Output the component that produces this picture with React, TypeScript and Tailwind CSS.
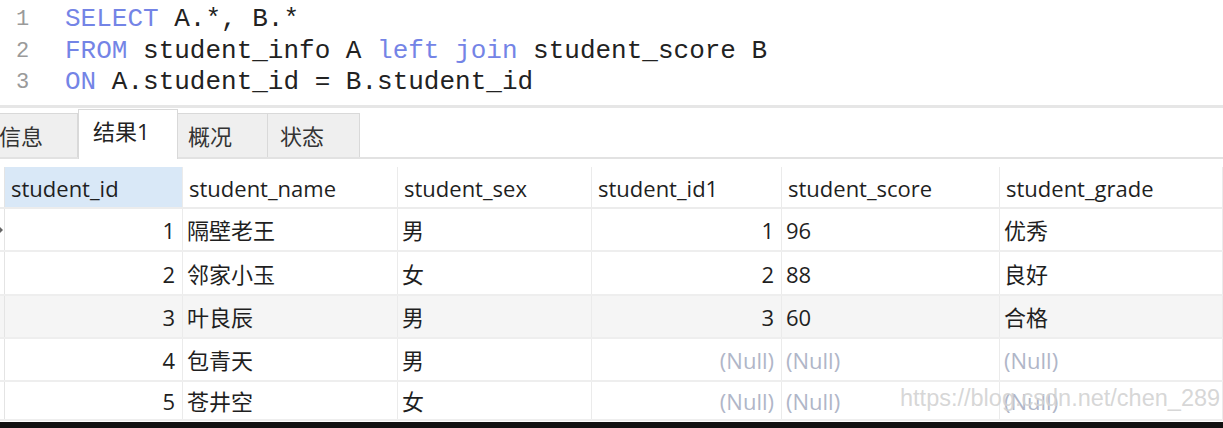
import React from "react";

const mono = { fontFamily: '"Liberation Mono", "Courier New", monospace' };

type Cell = { v: string; right?: boolean; nul?: boolean };

const rows: Cell[][] = [
  [{ v: "1", right: true }, { v: "隔壁老王" }, { v: "男" }, { v: "1", right: true }, { v: "96" }, { v: "优秀" }],
  [{ v: "2", right: true }, { v: "邻家小玉" }, { v: "女" }, { v: "2", right: true }, { v: "88" }, { v: "良好" }],
  [{ v: "3", right: true }, { v: "叶良辰" }, { v: "男" }, { v: "3", right: true }, { v: "60" }, { v: "合格" }],
  [{ v: "4", right: true }, { v: "包青天" }, { v: "男" }, { v: "(Null)", right: true, nul: true }, { v: "(Null)", nul: true }, { v: "(Null)", nul: true }],
  [{ v: "5", right: true }, { v: "苍井空" }, { v: "女" }, { v: "(Null)", right: true, nul: true }, { v: "(Null)", nul: true }, { v: "(Null)", nul: true }],
];

const headers = ["student_id", "student_name", "student_sex", "student_id1", "student_score", "student_grade"];
const rowHeights = ["h-[43px]", "h-[44px]", "h-[43px]", "h-[43px]", "h-[39px]"];

export default function App() {
  return (
    <div
      className="relative w-[1223px] h-[428px] overflow-hidden bg-white text-[#1f1f1f]"
      style={{ fontFamily: '"Open Sans", "Noto Sans CJK SC", sans-serif' }}
    >
      {/* editor */}
      <div className="h-[105px] pt-[4px] text-[26px] leading-[31.5px] text-[#222]" style={mono}>
        <div className="flex">
          <span className="w-[65px] pl-[16px] text-[22px] text-[#9a9a9a]">1</span>
          <span>
            <span className="text-[#7484e6]">SELECT</span> A.*, B.*
          </span>
        </div>
        <div className="flex">
          <span className="w-[65px] pl-[16px] text-[22px] text-[#9a9a9a]">2</span>
          <span>
            <span className="text-[#7484e6]">FROM</span> student_info A <span className="text-[#7484e6]">left join</span> student_score B
          </span>
        </div>
        <div className="flex">
          <span className="w-[65px] pl-[16px] text-[22px] text-[#9a9a9a]">3</span>
          <span>
            <span className="text-[#7484e6]">ON</span> A.student_id = B.student_id
          </span>
        </div>
      </div>
      <div className="h-[3px] bg-[#e6e6e6]" />

      {/* tabs */}
      <div className="flex h-[51px] items-end border-b-2 border-[#e2e2e2] text-[22px]">
        <div className="ml-[-12px] flex h-[44px] w-[90px] items-center border border-b-0 border-[#d9d9d9] bg-[#efefef] pl-[10px] pt-[2px] text-[#333]">
          信息
        </div>
        <div className="mb-[-2px] flex h-[50px] w-[100px] items-center border border-b-0 border-[#d9d9d9] bg-white pl-[14px] pb-[6px] text-[#222]">
          结果1
        </div>
        <div className="flex h-[44px] w-[90px] items-center border border-b-0 border-l-0 border-[#d9d9d9] bg-[#efefef] pl-[10px] pt-[2px] text-[#333]">
          概况
        </div>
        <div className="flex h-[44px] w-[92px] items-center border border-b-0 border-l-0 border-[#d9d9d9] bg-[#efefef] pl-[12px] pt-[2px] text-[#333]">
          状态
        </div>
      </div>

      {/* table */}
      <div className="pt-[8px] text-[22px]">
        <div className="grid h-[42px] grid-cols-[5px_178px_215px_194px_190px_218px_223px] border-b-2 border-[#ececec]">
          <div className="border-r border-[#e4e4e4]" />
          {headers.map((h, i) => (
            <div
              key={h}
              className={
                "flex items-center pl-[6px] pt-[3px] border-r border-[#ebebeb] " +
                (i === 0 ? "bg-[#d9e8f7]" : "bg-white")
              }
            >
              {h}
            </div>
          ))}
        </div>
        {rows.map((r, ri) => (
          <div
            key={ri}
            className={
              "grid grid-cols-[5px_178px_215px_194px_190px_218px_223px] border-b-2 border-[#eeeeee] " +
              rowHeights[ri] +
              (ri === 2 ? " bg-[#f5f5f5]" : " bg-white")
            }
          >
            <div className="relative border-r border-[#e4e4e4]">
              {ri === 0 && (
                <svg className="absolute left-0 top-[18px]" width="4" height="6" viewBox="0 0 4 6">
                  <path d="M0 0 L3 3 L0 6 Z" fill="#666" />
                </svg>
              )}
            </div>
            {r.map((c, ci) => (
              <div
                key={ci}
                className={
                  "flex items-center pt-[2px] border-r border-[#ebebeb] " +
                  (c.right ? "justify-end pr-[7px] " : "pl-[4px] ") +
                  (c.nul ? "text-[#b0b6c8]" : "text-[#1f1f1f]")
                }
              >
                {c.v}
              </div>
            ))}
          </div>
        ))}
      </div>

      {/* watermark */}
      <div
        className="absolute left-[900px] top-[383px] whitespace-nowrap text-[23.5px] leading-[30px] text-[#d2d2d2]/90"
        style={{ fontFamily: '"Liberation Sans", Arial, sans-serif' }}
      >
        https://blog.csdn.net/chen_289
      </div>

      {/* bottom border */}
      <div className="absolute bottom-0 left-0 h-[6px] w-full bg-[#111]" />
    </div>
  );
}
